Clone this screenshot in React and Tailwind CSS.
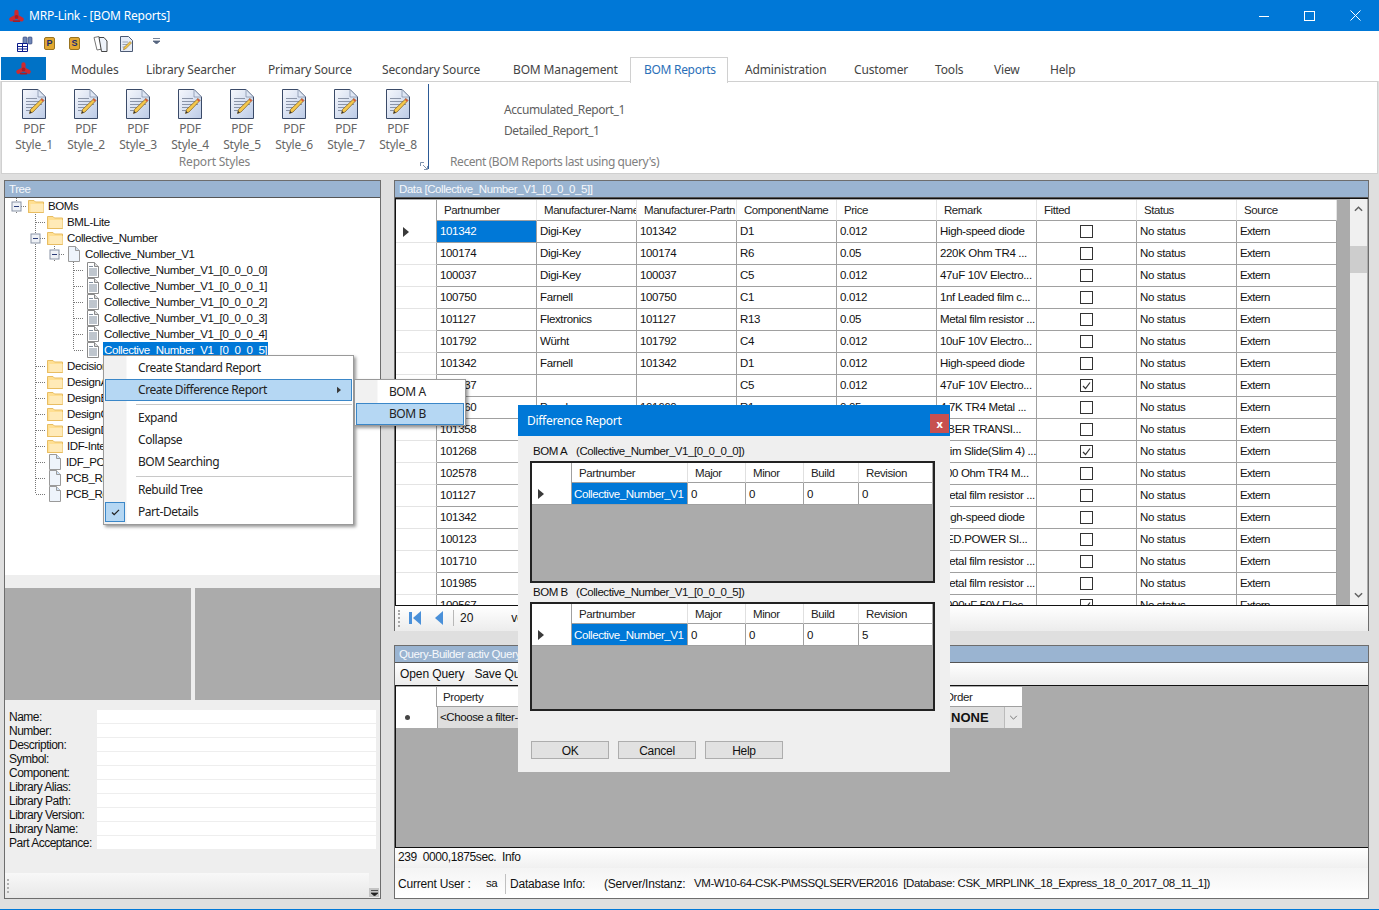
const ribbonFont = "font-['Noto_Sans',sans-serif]";
const gridFont = "font-['Liberation_Sans',sans-serif]";

const TABS = [
  { label: "Modules", w: "w-[75px]" },
  { label: "Library Searcher", w: "w-[122px]" },
  { label: "Primary Source", w: "w-[114px]" },
  { label: "Secondary Source", w: "w-[131px]" },
  { label: "BOM Management", w: "w-[117px]" },
  { label: "BOM Reports", w: "w-[98px]", active: true },
  { label: "Administration", w: "w-[109px]" },
  { label: "Customer", w: "w-[81px]" },
  { label: "Tools", w: "w-[59px]" },
  { label: "View", w: "w-[56px]" },
  { label: "Help", w: "w-[60px]" },
];

const COLUMNS = ["Partnumber", "Manufacturer-Name", "Manufacturer-Partn", "ComponentName", "Price", "Remark", "Fitted", "Status", "Source"];

const ROWS = [
  ["101342", "Digi-Key", "101342", "D1", "0.012", "High-speed diode", false],
  ["100174", "Digi-Key", "100174", "R6", "0.05", "220K Ohm TR4 ...", false],
  ["100037", "Digi-Key", "100037", "C5", "0.012", "47uF 10V Electro...", false],
  ["100750", "Farnell", "100750", "C1", "0.012", "1nf Leaded film c...", false],
  ["101127", "Flextronics", "101127", "R13", "0.05", "Metal film resistor ...", false],
  ["101792", "Würht", "101792", "C4", "0.012", "10uF 10V Electro...", false],
  ["101342", "Farnell", "101342", "D1", "0.012", "High-speed diode", false],
  ["100037", "", "", "C5", "0.012", "47uF 10V Electro...", true],
  ["101660", "Panel", "101660", "R1", "0.05", "4.7K TR4 Metal ...", false],
  ["101358", "Panel", "101358", "Q1", "0.05", "ABER TRANSI...", false],
  ["101268", "Panel", "101268", "SW1", "0.05", "Trim Slide(Slim 4) ...", true],
  ["102578", "Panel", "102578", "R2", "0.05", "100 Ohm TR4 M...", false],
  ["101127", "Panel", "101127", "R3", "0.05", "Metal film resistor ...", false],
  ["101342", "Panel", "101342", "D2", "0.012", "High-speed diode", false],
  ["100123", "Panel", "100123", "D3", "0.05", "LED.POWER SI...", false],
  ["101710", "Panel", "101710", "R4", "0.05", "Metal film resistor ...", false],
  ["101985", "Panel", "101985", "R5", "0.05", "Metal film resistor ...", false],
  ["100567", "Panel", "100567", "C2", "0.012", "1000uF 50V Elec...", true],
];

const TREE = [
  { cols: ["minus"], icon: "folder", label: "BOMs" },
  { cols: ["none", "tee"], icon: "folder", label: "BML-Lite" },
  { cols: ["none", "minus"], icon: "folder", label: "Collective_Number" },
  { cols: ["none", "pipe", "minus"], icon: "page", label: "Collective_Number_V1" },
  { cols: ["none", "pipe", "none", "tee"], icon: "list", label: "Collective_Number_V1_[0_0_0_0]" },
  { cols: ["none", "pipe", "none", "tee"], icon: "list", label: "Collective_Number_V1_[0_0_0_1]" },
  { cols: ["none", "pipe", "none", "tee"], icon: "list", label: "Collective_Number_V1_[0_0_0_2]" },
  { cols: ["none", "pipe", "none", "tee"], icon: "list", label: "Collective_Number_V1_[0_0_0_3]" },
  { cols: ["none", "pipe", "none", "tee"], icon: "list", label: "Collective_Number_V1_[0_0_0_4]" },
  { cols: ["none", "pipe", "none", "end"], icon: "list", label: "Collective_Number_V1_[0_0_0_5]", selected: true },
  { cols: ["none", "tee"], icon: "folder", label: "DecisionTree" },
  { cols: ["none", "tee"], icon: "folder", label: "DesignA" },
  { cols: ["none", "tee"], icon: "folder", label: "DesignB" },
  { cols: ["none", "tee"], icon: "folder", label: "DesignC" },
  { cols: ["none", "tee"], icon: "folder", label: "DesignD" },
  { cols: ["none", "tee"], icon: "folder", label: "IDF-Interface" },
  { cols: ["none", "tee"], icon: "page", label: "IDF_PCB" },
  { cols: ["none", "tee"], icon: "page", label: "PCB_Rules" },
  { cols: ["none", "end"], icon: "page", label: "PCB_Report" },
];

const DETAILS = ["Name:", "Number:", "Description:", "Symbol:", "Component:", "Library Alias:", "Library Path:", "Library Version:", "Library Name:", "Part Acceptance:"];

// small drawings
const Logo = ({ className }) => (
  <svg viewBox="0 0 16 14" className={className}>
    <path d="M8 7.5V2.5M8 7.5L2.5 10.5M8 7.5L13.5 10.5" stroke="#cc2a30" strokeWidth="4.5" strokeLinecap="round" fill="none" />
    <path d="M5 12.5H11" stroke="#a81c24" strokeWidth="2" strokeLinecap="round" />
    <circle cx="8" cy="8" r="2" fill="#a81c24" />
  </svg>
);

const PdfIcon = () => (
  <svg viewBox="0 0 24 30" className="w-6 h-[30px]">
    <defs>
      <linearGradient id="pg" x1="0" y1="0" x2="1" y2="1">
        <stop offset="0" stopColor="#f6f8fd" />
        <stop offset="1" stopColor="#bccbe6" />
      </linearGradient>
    </defs>
    <path d="M.5.5H16L23.5 8V29.5H.5Z" fill="url(#pg)" stroke="#3a4a68" />
    <path d="M16 .5V8H23.5Z" fill="#dfe7f4" stroke="#7c8aa3" strokeWidth=".7" />
    <path d="M4 9.5H15M4 12.5H20M4 15.5H20M4 18.5H12M4 21.5H9" stroke="#8a94a8" />
    <path d="M20 9.5L22 11.5L11 23L7.5 24.5L8.5 20.5Z" fill="#f5c84c" stroke="#7a5a20" strokeWidth=".7" />
    <path d="M20 9.5L22 11.5L20.8 12.8L18.8 10.8Z" fill="#d8553c" />
    <path d="M8 22L7.5 24.5L10 23.5Z" fill="#333" />
  </svg>
);

const Folder = () => (
  <svg viewBox="0 0 16 14" className="w-4 h-[14px]">
    <path d="M.5 1.5H6L7.5 3H15.5V13.5H.5Z" fill="#ffdf92" stroke="#e8bd62" />
    <path d="M2.5 5H15.5V13.5H2.5Z" fill="#ffeab8" />
    <path d="M.5 3.5V13.5H15.5" fill="none" stroke="#e8bd62" />
  </svg>
);

const PageIcon = () => (
  <svg viewBox="0 0 12 16" className="w-3 h-4">
    <path d="M.5.5H7.5L11.5 4.5V15.5H.5Z" fill="#eef4fb" stroke="#9a9a9a" />
    <path d="M7.5.5V4.5H11.5" fill="#cfe2f5" stroke="#9a9a9a" />
  </svg>
);

const ListIcon = () => (
  <svg viewBox="0 0 12 16" className="w-3 h-4">
    <path d="M.5.5H7.5L11.5 4.5V15.5H.5Z" fill="#fff" stroke="#8a8a8a" />
    <path d="M7.5.5V4.5H11.5" fill="#ddd" stroke="#8a8a8a" />
    <path d="M2 4.5H6M2 7H10M2 9H10M2 11H10M2 13H10" stroke="#7f8c9c" />
  </svg>
);

const TREE_ICONS = { folder: <Folder />, page: <PageIcon />, list: <ListIcon /> };

const TreeGuide = ({ kind }) => (
  <svg viewBox="0 0 19 16" className="w-[19px] h-4 shrink-0">
    {(kind === "pipe" || kind === "tee" || kind === "minus") && <path d="M9.5 0V16" stroke="#777" strokeDasharray="1 1" />}
    {kind === "end" && <path d="M9.5 0V8" stroke="#777" strokeDasharray="1 1" />}
    {(kind === "tee" || kind === "end" || kind === "minus") && <path d="M10 8.5H19" stroke="#777" strokeDasharray="1 1" />}
    {kind === "minus" && (
      <>
        <rect x="5" y="4" width="9" height="9" fill="#eef1f6" stroke="#8a94a6" />
        <path d="M7 8.5H12" stroke="#2b3c78" />
      </>
    )}
  </svg>
);

const TreeRow = ({ row }) => (
  <div className="flex items-center h-4">
    {row.cols.map((kind, i) => (
      <TreeGuide key={i} kind={kind} />
    ))}
    <div className="w-[19px] flex justify-center shrink-0">{TREE_ICONS[row.icon]}</div>
    <span className={`${row.icon === "folder" ? "ml-[2px]" : "ml-[1px]"} px-[1px] h-4 leading-4 whitespace-nowrap text-[11.5px] tracking-[-0.4px] ${row.selected ? "bg-[#0078d7] text-white" : "text-[#111]"}`}>
      {row.label}
    </span>
  </div>
);

const ArrowRight = ({ className }) => (
  <svg viewBox="0 0 6 10" className={className}>
    <path d="M0 0L6 5L0 10Z" fill="#3a3a3a" />
  </svg>
);

const Chevron = ({ up }) => (
  <svg viewBox="0 0 10 6" className="w-[9px] h-[6px]">
    <path d={up ? "M1 5L5 1L9 5" : "M1 1L5 5L9 1"} fill="none" stroke="#606060" strokeWidth="1.6" />
  </svg>
);

const Checkbox = ({ checked }) => (
  <div className="w-[13px] h-[13px] mb-[1px] border border-[#333] bg-white flex items-center justify-center">
    {checked && (
      <svg viewBox="0 0 11 11" className="w-[11px] h-[11px]">
        <path d="M2 6L4.5 8.5L9 2.5" fill="none" stroke="#333" strokeWidth="1.2" />
      </svg>
    )}
  </div>
);

const PanelHeader = ({ children }) => (
  <div className={`h-[17px] shrink-0 bg-[#9ab4d1] border-b border-[#555] pl-[4px] text-[11.5px] leading-[16px] text-[#f7f9fc] tracking-[-0.42px] whitespace-nowrap overflow-hidden ${gridFont}`}>
    {children}
  </div>
);

const DataGrid = () => (
  <div className="h-[408px] shrink-0 flex bg-[#ababab] border-y border-l border-[#111] overflow-hidden">
    <div className="flex-1 overflow-hidden pt-[1px]">
      <div className="flex h-[21px]">
        <div className="w-[41px] shrink-0 bg-white border-r border-[#a0a0a0]" />
        {COLUMNS.map((c) => (
          <div key={c} className="w-[100px] shrink-0 bg-white border-r border-[#e4e4e4] border-b border-b-[#a0a0a0] pl-[7px] text-[11.5px] leading-[20px] tracking-[-0.45px] text-[#222] whitespace-nowrap overflow-hidden">
            {c}
          </div>
        ))}
      </div>
      {ROWS.map((row, i) => (
        <div key={i} className="flex h-[22px]">
          <div className="w-[41px] shrink-0 bg-white border-r border-b border-r-[#a0a0a0] border-b-[#e4e4e4] flex items-center pl-[7px]">
            {i === 0 && <ArrowRight className="w-[6px] h-[10px]" />}
          </div>
          {row.slice(0, 6).map((v, j) => (
            <div key={j} className={`w-[100px] shrink-0 border-r border-b border-[#a0a0a0] pl-[3px] text-[11.5px] leading-[21px] tracking-[-0.35px] whitespace-nowrap overflow-hidden ${i === 0 && j === 0 ? "bg-[#0078d7] text-white" : "bg-white text-[#111]"}`}>
              {v}
            </div>
          ))}
          <div className="w-[100px] shrink-0 bg-white border-r border-b border-[#a0a0a0] flex items-center justify-center">
            <Checkbox checked={row[6]} />
          </div>
          <div className="w-[100px] shrink-0 bg-white border-r border-b border-[#a0a0a0] pl-[3px] text-[11.5px] leading-[21px] tracking-[-0.35px] text-[#111]">No status</div>
          <div className="w-[100px] shrink-0 bg-white border-r border-b border-[#a0a0a0] pl-[3px] text-[11.5px] leading-[21px] tracking-[-0.55px] text-[#111]">Extern</div>
        </div>
      ))}
    </div>
    <div className="w-[17px] shrink-0 mr-[1px] bg-[#f0f0f0] flex flex-col items-center justify-between py-[7px] relative">
      <Chevron up />
      <div className="absolute top-[47px] left-0 w-full h-[27px] bg-[#cdcdcd]" />
      <Chevron />
    </div>
  </div>
);

const NavBar = () => (
  <div className={`h-[25px] shrink-0 flex items-center pb-[1px] bg-gradient-to-b from-white to-[#ececec] text-[12px] text-[#111] ${gridFont}`}>
    <div className="ml-[3px] w-[2px] h-[17px] border-l-2 border-dotted border-[#a8a8a8]" />
    <svg viewBox="0 0 12 14" className="ml-[9px] w-3 h-[14px]">
      <path d="M0 1H3V13H0Z" fill="#4a90d9" />
      <path d="M12 0V14L4 7Z" fill="#4a90d9" />
    </svg>
    <svg viewBox="0 0 8 14" className="ml-[14px] w-2 h-[14px]">
      <path d="M8 0V14L0 7Z" fill="#4a90d9" />
    </svg>
    <div className="ml-[10px] w-px h-[16px] bg-[#b8b8b8]" />
    <span className="ml-[6px]">20</span>
    <span className="ml-[38px]">von</span>
  </div>
);

const SubGrid = ({ revision, heightClass }) => (
  <div className={`ml-[12px] w-[405px] ${heightClass} border-2 border-[#222] bg-[#ababab] ${gridFont}`}>
    <div className="flex h-[20px] text-[11.5px] tracking-[-0.4px] text-[#222]">
      <div className="w-[40px] bg-white border-r border-[#a0a0a0]" />
      <div className="w-[116px] bg-white pl-[7px] leading-[20px] border-r border-b border-[#e0e0e0] border-b-[#a0a0a0]">Partnumber</div>
      <div className="w-[58px] bg-white pl-[7px] leading-[20px] border-r border-b border-[#e0e0e0] border-b-[#a0a0a0]">Major</div>
      <div className="w-[58px] bg-white pl-[7px] leading-[20px] border-r border-b border-[#e0e0e0] border-b-[#a0a0a0]">Minor</div>
      <div className="w-[55px] bg-white pl-[7px] leading-[20px] border-r border-b border-[#e0e0e0] border-b-[#a0a0a0]">Build</div>
      <div className="w-[73px] bg-white pl-[7px] leading-[20px] border-b border-[#a0a0a0]">Revision</div>
    </div>
    <div className="flex h-[22px] text-[11.5px] tracking-[-0.4px] text-[#111]">
      <div className="w-[40px] bg-white border-r border-b border-[#a0a0a0] flex items-center pl-[6px]">
        <ArrowRight className="w-[6px] h-[10px]" />
      </div>
      <div className="w-[116px] bg-[#0078d7] text-white pl-[2px] leading-[22px] border-r border-b border-[#a0a0a0] whitespace-nowrap overflow-hidden">Collective_Number_V1</div>
      <div className="w-[58px] bg-white pl-[3px] leading-[22px] border-r border-b border-[#a0a0a0]">0</div>
      <div className="w-[58px] bg-white pl-[3px] leading-[22px] border-r border-b border-[#a0a0a0]">0</div>
      <div className="w-[55px] bg-white pl-[3px] leading-[22px] border-r border-b border-[#a0a0a0]">0</div>
      <div className="w-[73px] bg-white pl-[3px] leading-[22px] border-b border-[#a0a0a0]">{revision}</div>
    </div>
  </div>
);

const DialogLabel = ({ name, value, spaceClass }) => (
  <div className={`${spaceClass} mb-[2px] pl-[15px] h-[16px] leading-[16px] text-[11.5px] tracking-[-0.45px] text-[#111] whitespace-nowrap ${gridFont}`}>
    <span className="inline-block w-[43px]">{name}</span>
    {value}
  </div>
);

const DifferenceDialog = () => (
  <div className="absolute left-[518px] top-[405px] w-[432px] h-[367px] bg-[#efefef] flex flex-col">
    <div className={`h-[31px] shrink-0 bg-[#0078d7] flex items-center justify-between pl-[9px] text-[12px] tracking-[-0.3px] text-white ${ribbonFont}`}>
      <span>Difference Report</span>
      <div className="w-[19px] h-[19px] mr-[1px] mt-[5px] bg-[#c75050] flex items-center justify-center text-[11px] font-bold leading-none">x</div>
    </div>
    <DialogLabel name="BOM A" value="(Collective_Number_V1_[0_0_0_0])" spaceClass="mt-[7px]" />
    <SubGrid revision="0" heightClass="h-[122px]" />
    <DialogLabel name="BOM B" value="(Collective_Number_V1_[0_0_0_5])" spaceClass="mt-[1px]" />
    <SubGrid revision="5" heightClass="h-[109px]" />
    <div className={`mt-[30px] ml-[13px] flex gap-[9px] text-[12px] text-[#111] ${gridFont}`}>
      {["OK", "Cancel", "Help"].map((b) => (
        <div key={b} className="w-[78px] h-[18px] pt-[1px] bg-[#e1e1e1] border border-[#adadad] flex items-center justify-center tracking-[-0.3px]">{b}</div>
      ))}
    </div>
  </div>
);

const MenuItem = ({ children, highlighted, arrow, check }) => (
  <div className={`relative h-[22px] flex items-center text-[12px] tracking-[-0.45px] text-[#222] ${ribbonFont} ${highlighted ? "bg-[#b5d7f3] border border-[#3b87c8] mx-[1px] pl-[32px]" : "pl-[34px]"}`}>
    {check && (
      <div className="absolute left-[1px] top-[1px] w-[20px] h-[20px] bg-[#b5d7f3] border border-[#3b87c8] flex items-center justify-center">
        <svg viewBox="0 0 10 8" className="w-[9px] h-[7px]">
          <path d="M1 4L3.5 6.5L9 1" fill="none" stroke="#222" strokeWidth="1.5" />
        </svg>
      </div>
    )}
    {children}
    {arrow && <ArrowRight className="absolute right-[10px] top-[6px] w-[4px] h-[8px]" />}
  </div>
);

const MenuSeparator = () => <div className="ml-[32px] mr-[1px] mt-[3px] mb-[2px] h-px bg-[#c8c8c8]" />;

const ContextMenu = () => (
  <>
    <div className="absolute left-[103px] top-[355px] w-[251px] h-[170px] bg-white border border-[#9a9a9a] shadow-[2px_2px_3px_rgba(0,0,0,0.4)] bg-gradient-to-r from-[#f1f1f1] from-[22px] to-white to-[23px] pt-[1px]">
      <MenuItem>Create Standard Report</MenuItem>
      <MenuItem highlighted arrow>Create Difference Report</MenuItem>
      <MenuSeparator />
      <MenuItem>Expand</MenuItem>
      <MenuItem>Collapse</MenuItem>
      <MenuItem>BOM Searching</MenuItem>
      <MenuSeparator />
      <MenuItem>Rebuild Tree</MenuItem>
      <MenuItem check>Part-Details</MenuItem>
    </div>
    <div className="absolute left-[354px] top-[379px] w-[112px] h-[47px] border border-[#9a9a9a] shadow-[2px_2px_3px_rgba(0,0,0,0.4)] bg-gradient-to-r from-[#f1f1f1] from-[22px] to-white to-[23px] pt-[1px]">
      <MenuItem>BOM A</MenuItem>
      <MenuItem highlighted>BOM B</MenuItem>
    </div>
  </>
);

const QatIcons = () => (
  <div className="h-[25px] shrink-0 bg-white flex items-center pl-[17px]">
    <svg viewBox="0 0 17 16" className="w-[17px] h-4">
      <rect x="6" y="1" width="4" height="7" rx="1" fill="#6f86b8" stroke="#2a3a70" strokeWidth=".6" />
      <rect x="11" y="1" width="4" height="7" rx="1" fill="#6f86b8" stroke="#2a3a70" strokeWidth=".6" />
      <path d="M.5 7.5H10.5V15.5H.5ZM.5 10.5H10.5M.5 13H10.5M5.5 7.5V15.5" fill="#fff" stroke="#0a1a8a" />
    </svg>
    <div className="ml-[10px] w-[11px] h-[13px] rounded-[2px] bg-[#e2a832] border border-[#9a7420] text-[9px] font-bold leading-[11px] text-center text-[#1a2a70] font-['Liberation_Sans']">P</div>
    <div className="ml-[14px] w-[11px] h-[13px] rounded-[2px] bg-[#e2a832] border border-[#9a7420] text-[9px] font-bold leading-[11px] text-center text-[#1a2a70] font-['Liberation_Sans']">S</div>
    <svg viewBox="0 0 15 16" className="ml-[13px] w-[15px] h-4">
      <path d="M1 1.5L6 .5L9 13L4 14Z" fill="#fff" stroke="#777" />
      <path d="M6 1.5H11L14 5V15.5H8.5Z" fill="#eef3fa" stroke="#444" />
    </svg>
    <svg viewBox="0 0 13 16" className="ml-[12px] w-[13px] h-4">
      <path d="M.5.5H8.5L12.5 4.5V15.5H.5Z" fill="#e6ecf7" stroke="#4c5a74" />
      <path d="M2.5 6H8M2.5 8.5H9M2.5 11H6" stroke="#9aa3b4" />
      <path d="M10 5.5L11.5 7L5.5 13L3.5 13.8L4 11.5Z" fill="#f5c84c" stroke="#7a5a20" strokeWidth=".5" />
    </svg>
    <svg viewBox="0 0 7 6" className="ml-[20px] mb-[6px] w-[7px] h-[6px]">
      <path d="M0 .5H7M0 3L3.5 6L7 3Z" stroke="#55657f" fill="#55657f" strokeWidth=".8" />
    </svg>
  </div>
);

const App = () => {
  return (
    <div className={`relative w-[1379px] h-[910px] overflow-hidden flex flex-col bg-[#dfdfdf] ${gridFont}`}>
      {/* title bar */}
      <div className={`h-[31px] shrink-0 bg-[#0078d7] flex items-center text-white ${ribbonFont}`}>
        <Logo className="ml-[9px] w-[15px] h-[14px]" />
        <span className="ml-[5px] text-[12px] tracking-[-0.2px]">MRP-Link - [BOM Reports]</span>
        <div className="flex-1" />
        <svg viewBox="0 0 10 10" className="mr-[35px] w-[10px] h-[10px]">
          <path d="M0 5.5H10" stroke="#fff" />
        </svg>
        <div className="mr-[35px] w-[11px] h-[10px] border border-white" />
        <svg viewBox="0 0 11 11" className="mr-[18px] w-[11px] h-[11px]">
          <path d="M.5.5L10.5 10.5M10.5.5L.5 10.5" stroke="#fff" />
        </svg>
      </div>
      <QatIcons />
      {/* ribbon tabs */}
      <div className={`h-[25px] shrink-0 bg-white flex text-[12px] text-[#444] tracking-[-0.15px] ${ribbonFont}`}>
        <div className="ml-[1px] mt-[1px] w-[45px] h-[23px] bg-[#0072c6] flex items-center justify-center">
          <Logo className="w-[15px] h-[13px]" />
        </div>
        <div className="w-[25px]" />
        {TABS.map((t) =>
          t.active ? (
            <div key={t.label} className="w-[98px] h-[26px] mt-[1px] mr-[17px] z-10 bg-white border border-b-0 border-[#d0d0d0] pl-[13px] leading-[24px] text-[#2b6fb8] tracking-[-0.3px]">{t.label}</div>
          ) : (
            <div key={t.label} className={`${t.w} leading-[27px] whitespace-nowrap`}>{t.label}</div>
          )
        )}
      </div>
      {/* ribbon panel */}
      <div className={`h-[93px] shrink-0 mx-[1px] bg-white border border-[#d0d0d0] flex text-[12px] text-[#666] ${ribbonFont}`}>
        <div className="w-[426px] flex flex-col relative tracking-[-0.2px]">
          <div className="flex pl-[6px] pt-[7px]">
            {[1, 2, 3, 4, 5, 6, 7, 8].map((n) => (
              <div key={n} className="w-[52px] flex flex-col items-center leading-[16px]">
                <PdfIcon />
                <span className="mt-[2px]">PDF</span>
                <span>Style_{n}</span>
              </div>
            ))}
          </div>
          <div className="text-center pr-[1px] pt-[1px] text-[#808080] leading-[16px]">Report Styles</div>
          <svg viewBox="0 0 8 8" className="absolute right-0 bottom-[3px] w-2 h-2">
            <path d="M.5 4V.5H4M3 3L7 7M7.5 4V7.5H4" fill="none" stroke="#7f93ad" />
          </svg>
        </div>
        <div className="w-px h-[85px] mt-[2px] bg-[#2c5a96]" />
        <div className="flex flex-col pl-[21px] text-[#5e5e5e] tracking-[-0.42px]">
          <div className="pl-[54px] mt-[20px] leading-[16px]">Accumulated_Report_1</div>
          <div className="pl-[54px] mt-[5px] leading-[16px]">Detailed_Report_1</div>
          <div className="mt-[15px] leading-[16px] text-[#808080]">Recent (BOM Reports last using query's)</div>
        </div>
      </div>
      {/* workspace */}
      <div className="flex-1 flex pl-[4px] pr-[10px] pt-[6px] pb-[10px] gap-[13px] min-h-0">
        {/* left panel */}
        <div className="w-[377px] shrink-0 flex flex-col border border-[#6d6d6d] bg-[#eeeeee]">
          <PanelHeader>Tree</PanelHeader>
          <div className="h-[377px] shrink-0 bg-white pl-[2px] overflow-hidden">
            {TREE.map((row, i) => (
              <TreeRow key={i} row={row} />
            ))}
          </div>
          <div className="h-[112px] shrink-0 mt-[13px] flex gap-[4px]">
            <div className="w-[186px] bg-[#ababab]" />
            <div className="flex-1 bg-[#ababab]" />
          </div>
          <div className="mt-[10px] mx-[4px] flex flex-col text-[12px] tracking-[-0.5px] text-[#111]">
            {DETAILS.map((d) => (
              <div key={d} className="flex h-[14px]">
                <div className="w-[88px] leading-[14px] whitespace-nowrap">{d}</div>
                <div className="w-[279px] h-[13px] bg-white" />
              </div>
            ))}
          </div>
          <div className="flex-1" />
          <div className="h-[25px] shrink-0 flex items-end">
            <div className="h-[25px] w-[364px] bg-gradient-to-b from-[#f8f8f8] to-[#e8e8e8] flex items-center pl-[2px]">
              <div className="w-[2px] h-[14px] border-l-2 border-dotted border-[#b0b0b0]" />
            </div>
            <div className="w-[10px] h-[9px] mb-[1px] bg-[#c4c4c4] flex items-center justify-center">
              <svg viewBox="0 0 7 6" className="w-[7px] h-[6px]">
                <path d="M0 .5H7M0 3L3.5 6L7 3Z" stroke="#222" fill="#222" strokeWidth=".7" />
              </svg>
            </div>
          </div>
        </div>
        {/* right column */}
        <div className="flex-1 flex flex-col gap-[14px] min-w-0">
          <div className="h-[451px] shrink-0 flex flex-col border border-[#6d6d6d] bg-[#eeeeee]">
            <PanelHeader>Data [Collective_Number_V1_[0_0_0_5]]</PanelHeader>
            <DataGrid />
            <NavBar />
          </div>
          <div className="flex-1 min-h-0 flex flex-col border border-[#6d6d6d] bg-[#eeeeee]">
            <PanelHeader>Query-Builder activ Query</PanelHeader>
            <div className="h-[22px] shrink-0 flex items-center gap-[10px] pl-[5px] bg-gradient-to-b from-white to-[#ececec] text-[12px] tracking-[-0.1px] text-[#111]">
              <span>Open Query</span>
              <span>Save Query</span>
            </div>
            <div className="h-[163px] shrink-0 bg-[#ababab] border-y border-l border-[#111] pt-[1px]">
              <div className="flex h-[20px] text-[11.5px] tracking-[-0.4px] text-[#222]">
                <div className="w-[41px] bg-white border-r border-[#a0a0a0]" />
                <div className="w-[500px] bg-white pl-[6px] leading-[20px] border-b border-[#a0a0a0]">Property</div>
                <div className="w-[85px] bg-white pl-[8px] leading-[20px] border-b border-[#a0a0a0]">Order</div>
              </div>
              <div className="flex h-[21px] text-[11.5px] tracking-[-0.4px] text-[#111]">
                <div className="w-[41px] bg-white flex items-center pl-[9px]">
                  <div className="w-[5px] h-[5px] rounded-full bg-[#444]" />
                </div>
                <div className="w-[500px] bg-[#dedede] pl-[2px] leading-[21px] border-l border-[#a0a0a0]">&lt;Choose a filter-property&gt;</div>
                <div className="w-[85px] flex bg-[#dedede]">
                  <span className="flex-1 pl-[14px] text-[13px] font-bold leading-[21px] tracking-normal">NONE</span>
                  <div className="w-[18px] bg-[#e8e8e8] border-l border-[#bbb] flex items-center justify-center">
                    <svg viewBox="0 0 10 6" className="w-[9px] h-[5px]">
                      <path d="M1 1L5 5L9 1" fill="none" stroke="#606060" />
                    </svg>
                  </div>
                </div>
              </div>
            </div>
            <div className="h-[20px] shrink-0 pl-[3px] bg-gradient-to-b from-white to-[#f0f0f0] text-[12px] tracking-[-0.4px] leading-[19px] text-[#111] whitespace-pre">239  0000,1875sec.  Info</div>
            <div className="flex-1 flex items-center pl-[3px] pt-[1px] bg-gradient-to-b from-[#f4f4f4] to-white text-[11.5px] tracking-[-0.41px] text-[#111] whitespace-nowrap">
              <span className="w-[88px] text-[12px] tracking-[-0.2px]">Current User :</span>
              <span className="w-[19px]">sa</span>
              <div className="w-px h-[20px] bg-[#c0c0c0]" />
              <span className="ml-[4px] w-[94px] text-[12px] tracking-[-0.2px]">Database Info:</span>
              <span className="w-[90px] text-[12px] tracking-[-0.2px]">(Server/Instanz:</span>
              <span className="whitespace-pre">VM-W10-64-CSK-P\MSSQLSERVER2016  [Database: CSK_MRPLINK_18_Express_18_0_2017_08_11_1])</span>
            </div>
          </div>
        </div>
      </div>
      <div className="h-px shrink-0 bg-[#0078d7]" />
      <ContextMenu />
      <DifferenceDialog />
    </div>
  );
};

export default App;
